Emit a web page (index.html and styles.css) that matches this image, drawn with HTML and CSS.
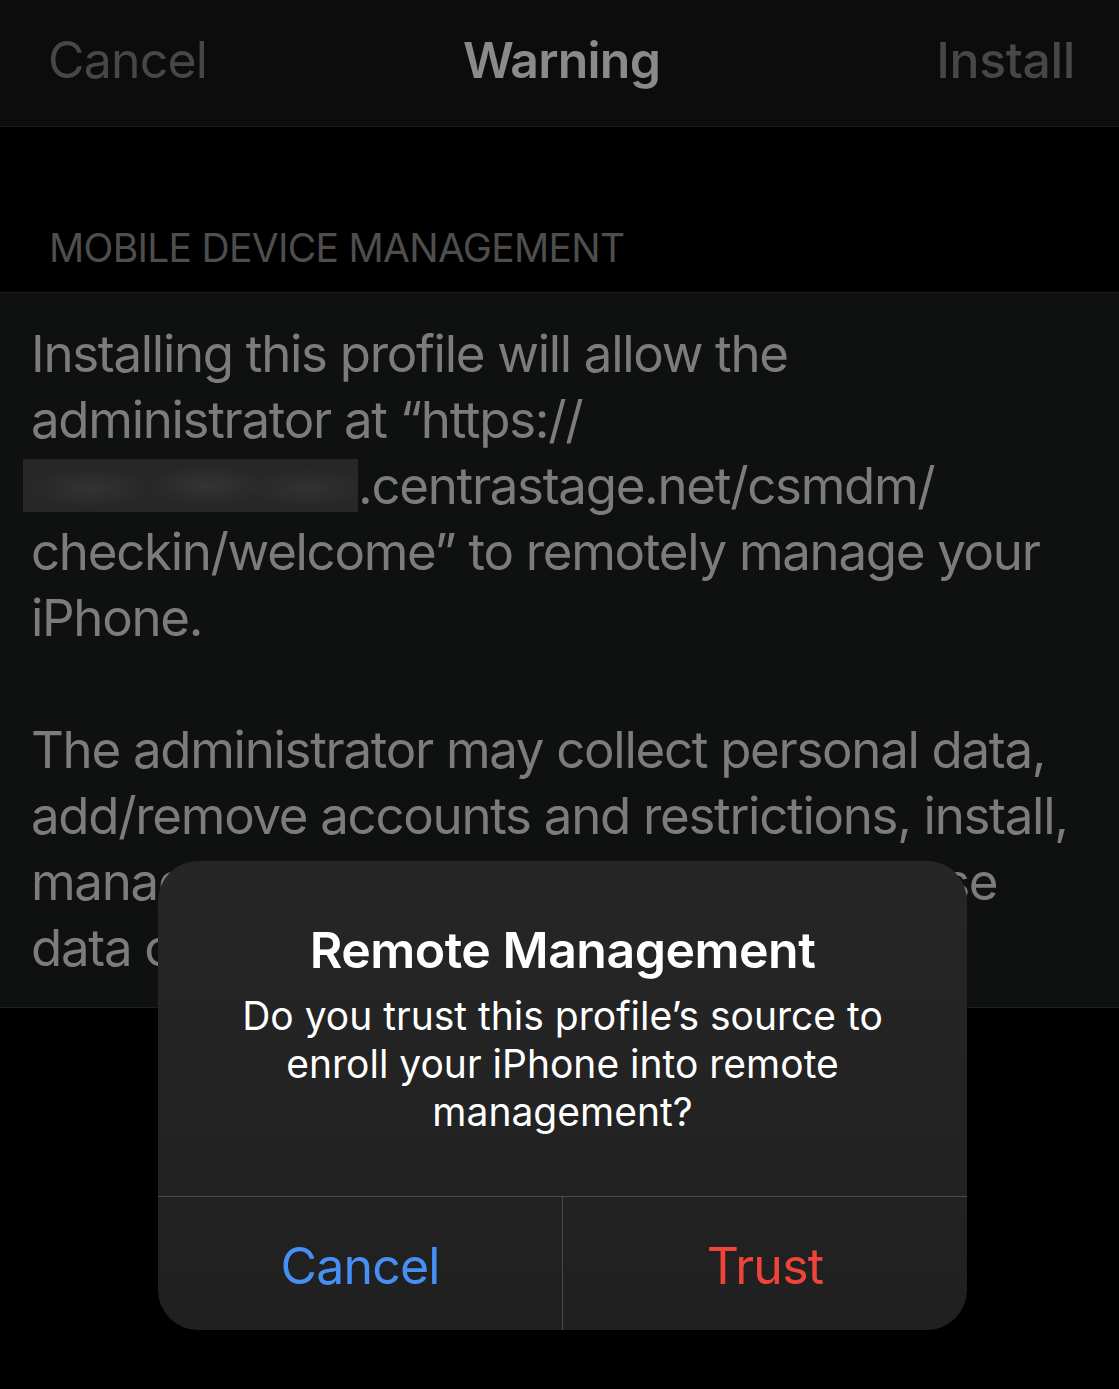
FILE: index.html
```html
<!DOCTYPE html>
<html lang="en">
<head>
    <meta charset="UTF-8">
    <meta name="viewport" content="width=device-width, initial-scale=1.0">
    <title>Warning</title>
    <link rel="stylesheet" href="styles.css">
</head>
<body>

<div id="screen">

    <div class="nav-bar">
        <span class="nav-button">Cancel</span>
        <span class="nav-title">Warning</span>
        <span class="nav-button install">Install</span>
    </div>

    <div class="section-header">MOBILE DEVICE MANAGEMENT</div>

    <div class="section-body">
        <p>Installing this profile will allow the<br>
        administrator at “https://<br>
        <span class="redacted"></span>.centrastage.net/csmdm/<br>
        checkin/welcome” to remotely manage your<br>
        iPhone.</p>
        <p>The administrator may collect personal data,<br>
        add/remove accounts and restrictions, install,<br>
        manage, and list apps, and remotely erase<br>
        data on your iPhone.</p>
    </div>

    <div class="alert">
        <div class="alert-text">
            <h2>Remote Management</h2>
            <p>Do you trust this profile’s source to enroll your iPhone into remote management?</p>
        </div>
        <div class="alert-actions">
            <button class="cancel">Cancel</button>
            <button class="trust">Trust</button>
        </div>
    </div>

</div>

</body>
</html>
```

FILE: styles.css
```css
body {
    margin: 0;
    background-color: #000;
    font-family: Inter, "Noto Sans", sans-serif;
}

#screen {
    position: relative;
    width: 1119px;
    height: 1389px;
    overflow: hidden;
    background-color: #000;
}

.nav-bar {
    height: 120px;
    padding: 0 44px 6px 48px;
    display: grid;
    grid-template-columns: 1fr auto 1fr;
    align-items: center;
    background-color: #0c0c0c;
    border-bottom: 1px solid #1a1a1a;
}

.nav-button {
    font-size: 50px;
    letter-spacing: -0.8px;
    color: #474747;
}

.nav-button.install {
    justify-self: end;
    font-weight: 500;
    letter-spacing: -0.4px;
}

.nav-title {
    font-size: 50px;
    font-weight: 600;
    letter-spacing: -0.8px;
    color: #8a8a8a;
}

.section-header {
    padding: 97px 49px 21px;
    font-size: 39px;
    line-height: 47px;
    letter-spacing: -0.7px;
    color: #4e4e4e;
    border-bottom: 1px solid #1f1f1f;
}

.section-body {
    padding: 28px 31px 26px;
    background-color: #0f1010;
    border-bottom: 1px solid #1f1f1f;
}

.section-body p {
    margin: 0 0 66px;
    font-size: 51px;
    line-height: 66px;
    letter-spacing: -1.3px;
    white-space: nowrap;
    color: #7c7c7c;
}

.section-body p:last-child {
    margin-bottom: 0;
}

.redacted {
    display: inline-block;
    width: 335px;
    height: 53px;
    margin-left: -8px;
    vertical-align: -8px;
    background:
        radial-gradient(ellipse 60px 20px at 20% 55%, #333 0%, transparent 100%),
        radial-gradient(ellipse 60px 20px at 55% 50%, #343434 0%, transparent 100%),
        radial-gradient(ellipse 60px 20px at 85% 55%, #323232 0%, transparent 100%),
        #272727;
}

/* alert sits over the page */
.alert {
    position: absolute;
    left: 158px;
    top: 861px;
    width: 809px;
    height: 469px;
    display: flex;
    flex-direction: column;
    border-radius: 40px;
    overflow: hidden;
    background: linear-gradient(#262626, #202020);
}

.alert-text {
    flex: 1;
    padding: 60px 80px 0;
    text-align: center;
    color: #fff;
}

.alert-text h2 {
    margin: 0 -40px;
    font-size: 50px;
    line-height: 58px;
    font-weight: 600;
    letter-spacing: -0.5px;
}

.alert-text p {
    margin: 13px 0 0;
    font-size: 39px;
    line-height: 48px;
    letter-spacing: 0;
}

.alert-actions {
    height: 133px;
    display: flex;
    border-top: 1px solid #4a4a4a;
}

.alert-actions button {
    flex: 1;
    margin: 0;
    padding: 4px 0 0;
    border: none;
    background: none;
    font-family: Inter, "Noto Sans", sans-serif;
    font-size: 50px;
    letter-spacing: -0.8px;
}

.alert-actions .cancel {
    color: #4690f5;
    border-right: 1px solid #4a4a4a;
}

.alert-actions .trust {
    color: #f0443a;
}
```
